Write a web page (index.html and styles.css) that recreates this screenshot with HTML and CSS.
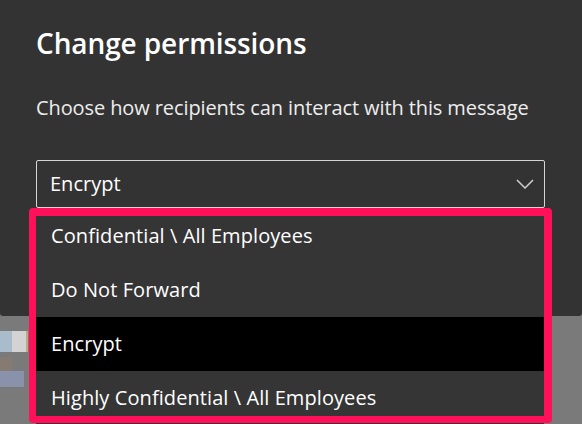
FILE: index.html
```html
<!DOCTYPE html>
<html lang="en">
<head>
<meta charset="utf-8">
<title>Change permissions</title>
<link rel="stylesheet" href="styles.css">
</head>
<body>
<div class="screen">
  <section class="dialog">
    <h1 class="title">Change permissions</h1>
    <p class="subtitle">Choose how recipients can interact with this message</p>
    <div class="select">
      <span class="select-value">Encrypt</span>
      <svg class="chevron" width="18" height="10" viewBox="0 0 18 10" aria-hidden="true">
        <path d="M1 1 L9 9 L17 1" fill="none" stroke="#d0d0d0" stroke-width="1.5"/>
      </svg>
    </div>
  </section>
  <div class="backdrop">
    <div class="blur-row">
      <span class="blur b1"></span><span class="blur b2"></span><span class="blur b3"></span>
    </div>
    <span class="blur b4"></span>
    <span class="blur b5"></span>
  </div>
  <ul class="menu">
    <li class="item">Confidential \ All Employees</li>
    <li class="item">Do Not Forward</li>
    <li class="item selected">Encrypt</li>
    <li class="item">Highly Confidential \ All Employees</li>
  </ul>
  <div class="highlight"></div>
</div>
</body>
</html>
```
FILE: styles.css
```css
html, body {
  margin: 0;
  padding: 0;
  background: #7a7a7a;
  overflow: hidden;
}
.screen {
  position: relative;
  width: 582px;
  height: 424px;
  overflow: hidden;
  font-family: "Open Sans", "Noto Sans", sans-serif;
  color: #fff;
}
.dialog {
  height: 316px;
  box-sizing: border-box;
  background: #333333;
  padding: 23px 37px 0 36px;
  border-radius: 0 0 3px 3px;
}
.title {
  margin: 0;
  font-size: 28px;
  line-height: 40px;
  font-weight: 600;
  letter-spacing: -0.1px;
}
.subtitle {
  margin: 31px 0 0;
  font-size: 20px;
  line-height: 28px;
  font-weight: 400;
  letter-spacing: -0.1px;
  color: #ededed;
}
.select {
  margin-top: 38px;
  height: 48px;
  box-sizing: border-box;
  border: 1px solid #d6d6d6;
  border-radius: 2px;
  display: flex;
  align-items: center;
  justify-content: space-between;
  padding: 0 10px 0 13px;
}
.select-value {
  font-size: 20px;
  line-height: 28px;
}
.chevron {
  display: block;
}
.backdrop {
  padding-top: 15px;
}
.blur-row {
  display: flex;
  height: 21px;
}
.blur {
  display: block;
}
.b1 { width: 12px; background: #a9bccb; }
.b2 { width: 14px; background: #d3d3d3; }
.b3 { width: 2px; background: #c2a686; }
.b4 { width: 12px; height: 14px; margin-top: 5px; background: #857b73; }
.b5 { width: 24px; height: 16px; background: #8a92ab; }
.menu {
  position: absolute;
  left: 36px;
  top: 209px;
  width: 508px;
  margin: 0;
  padding: 0;
  list-style: none;
  background: #353535;
}
.item {
  height: 54px;
  box-sizing: border-box;
  padding-left: 15px;
  display: flex;
  align-items: center;
  font-size: 20px;
  line-height: 28px;
  letter-spacing: 0.08px;
  color: #fff;
}
.item.selected {
  background: #000;
}
.highlight {
  position: absolute;
  left: 29px;
  top: 208px;
  width: 523px;
  height: 215px;
  box-sizing: border-box;
  border-style: solid;
  border-color: #ff1059;
  border-width: 8px 8px 7px 7px;
  border-radius: 4px;
}
```
